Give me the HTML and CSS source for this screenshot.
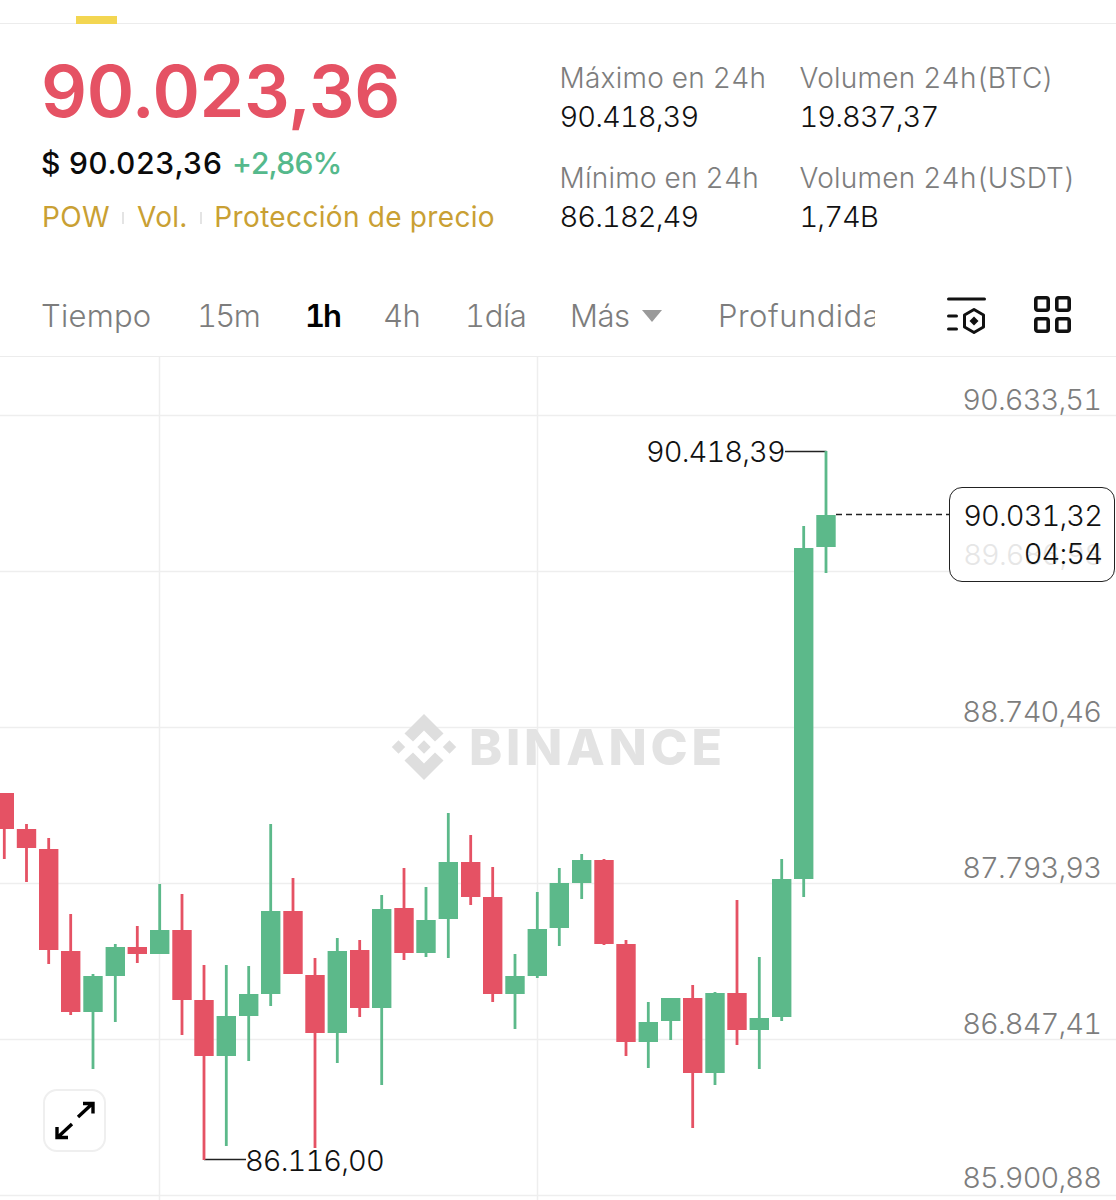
FILE: index.html
```html
<!DOCTYPE html>
<html lang="es">
<head>
<meta charset="utf-8">
<title>BTC/USDT</title>
<link rel="stylesheet" href="styles.css">
</head>
<body>
<div class="page">
  <div class="topbar"><span class="indicator"></span></div>
  <section class="summary">
    <div class="price-col">
      <div class="price">90.023,36</div>
      <div class="sub"><span class="fiat">$ 90.023,36</span><span class="change">+2,86%</span></div>
      <div class="tags"><span>POW</span><i class="sep"></i><span>Vol.</span><i class="sep"></i><span>Protección de precio</span></div>
    </div>
    <div class="stats">
      <div class="stat"><div class="stat-label">Máximo en 24h</div><div class="stat-value">90.418,39</div></div>
      <div class="stat"><div class="stat-label">Volumen 24h(BTC)</div><div class="stat-value">19.837,37</div></div>
      <div class="stat"><div class="stat-label">Mínimo en 24h</div><div class="stat-value">86.182,49</div></div>
      <div class="stat"><div class="stat-label">Volumen 24h(USDT)</div><div class="stat-value">1,74B</div></div>
    </div>
  </section>
  <nav class="tabs">
    <span class="tab t-time">Tiempo</span>
    <span class="tab t-15">15m</span>
    <span class="tab t-1h active">1h</span>
    <span class="tab t-4h">4h</span>
    <span class="tab t-1d">1día</span>
    <span class="tab t-more">Más<i class="caret"></i></span>
    <span class="tab t-depth">Profundida</span>
    <svg class="icon-list" viewBox="0 0 40 38" fill="none" stroke="#111" stroke-width="3" stroke-linecap="round" stroke-linejoin="round"><path d="M2.500 2h36M2.500 19h8M2.500 32h8"/><path d="M28 12.500l9.500 5.500v12l-9.500 5.500-9.500-5.500V18z"/><path d="M28 19.500l4.500 4.500L28 28.500l-4.500-4.500z" fill="#111" stroke="none"/></svg>
    <svg class="icon-grid" viewBox="0 0 38 38" fill="none" stroke="#111" stroke-width="3.600" stroke-linejoin="round"><rect x="2.800" y="1.800" width="12.400" height="12.400" rx="2"/><rect x="23.800" y="1.800" width="12.400" height="12.400" rx="2"/><rect x="2.800" y="22.800" width="12.400" height="12.400" rx="2"/><rect x="23.800" y="22.800" width="12.400" height="12.400" rx="2"/></svg>
  </nav>
  <div class="chart">
    <svg class="plot" viewBox="0 357 1116 843">
      <path class="grid" d="M0 415.5H1116M0 571.5H1116M0 727.5H1116M0 883.5H1116M0 1039.5H1116M0 1195.5H1116M159.5 357V1200M537.5 357V1200"/>
      <path class="leader" d="M785 451.5H826.5M204 1159.5H246"/>
      <path class="dash" d="M836 514.5H949"/>
      <path class="wick red" d="M4.3 793V859M26.5 824V882M48.7 838V964M70.7 914V1015M137.3 926V963M182 894V1035M204 965V1160M293 878V974M315 958V1148M359.7 940V1017M404 868V960M470.7 835V905M492.7 867V1002M604 859V945M626 940V1056M692.7 985V1128M737 900V1045"/>
      <path class="body red" d="M4.3 793V829M26.5 829V848M48.7 849V950M70.7 951V1012M137.3 947V954M182 930V1000M204 1000V1056M293 911V974M315 975V1033M359.7 950V1008M404 908V953M470.7 862V897M492.7 897V994M604 860V944M626 944V1042M692.7 998V1073M737 993V1030"/>
      <path class="wick green" d="M93 974V1069M115.3 944V1022M159.7 884V954M226.3 965V1146M248.7 966V1061M270.7 824V1006M337.3 938V1063M381.7 895V1085M426 887V957M448.3 813V958M515 954V1029M537.3 892V978M559.3 868V946M581.7 854V899M648.3 1002V1068M670.7 998V1040M715 992V1085M759.3 957V1069M781.7 859V1021M803.7 526V897M826 451V573"/>
      <path class="body green" d="M93 976V1012M115.3 947V976M159.7 930V954M226.3 1016V1056M248.7 994V1016M270.7 911V994M337.3 951V1033M381.7 909V1008M426 920V953M448.3 862V919M515 976V994M537.3 929V976M559.3 883V928M581.7 860V883M648.3 1022V1042M670.7 998V1021M715 993V1073M759.3 1018V1030M781.7 879V1017M803.7 548V879M826 515V547"/>
    </svg>
    <div class="watermark">
      <svg class="logo" viewBox="-33 -33 66 66"><path d="M0-33L19.500-13.500L11-5.500L0-16.500L-11-5.500L-19.500-13.500zM0 33L19.500 13.500L11 5.500L0 16.500L-11 5.500L-19.500 13.500zM0-6.700L6.700 0L0 6.700L-6.700 0zM-25.500-6.700L-18.800 0L-25.500 6.700L-32.200 0zM25.500-6.700L32.200 0L25.500 6.700L18.800 0z"/></svg>
      <span class="wm-text">BINANCE</span>
    </div>
    <span class="axis a1">90.633,51</span>
    <span class="axis a3">88.740,46</span>
    <span class="axis a4">87.793,93</span>
    <span class="axis a5">86.847,41</span>
    <span class="axis a6">85.900,88</span>
    <span class="mark m-high">90.418,39</span>
    <span class="mark m-low">86.116,00</span>
    <div class="tag">
      <span class="tag-under">89.686,98</span>
      <span class="tag-price">90.031,32</span>
      <span class="tag-time">04:54</span>
    </div>
    <div class="expand">
      <svg viewBox="0 0 40 40" fill="none" stroke="#000" stroke-width="3.400"><path d="M23 16L37 3M28 2.500h10v10M17 23L3 36M2 26v10.500h11"/></svg>
    </div>
  </div>
</div>
</body>
</html>
```
FILE: styles.css
```css
* { box-sizing: border-box; }
html, body { margin: 0; padding: 0; background: #fff; }
body { font-family: "Inter", "Liberation Sans", sans-serif; color: #111; font-variant-numeric: tabular-nums; }
.page { width: 1116px; height: 1200px; overflow: hidden; display: flex; flex-direction: column; }

.topbar { height: 24px; border-bottom: 1px solid #ececec; padding-left: 76px; display: flex; align-items: flex-end; }
.indicator { display: block; width: 41px; height: 8px; margin-bottom: -1px; background: #f3d651; }

.summary { display: flex; height: 239px; padding-left: 41px; }
.price-col { width: 518.5px; display: flex; flex-direction: column; }
.price { font-size: 72px; line-height: 74px; font-weight: 600; color: #e55264; margin-top: 30px; letter-spacing: -0.35px; font-variant-numeric: normal; }
.sub { display: flex; gap: 10px; margin-top: 15px; font-size: 30px; line-height: 40px; }
.fiat { color: #0b0b0b; font-weight: 500; letter-spacing: 0.15px; }
.change { color: #55b98c; font-weight: 500; letter-spacing: -1.1px; }
.tags { display: flex; align-items: center; margin: 14px 0 0 1px; font-size: 28px; line-height: 40px; color: #c9a033; letter-spacing: 0.35px; }
.sep { display: block; width: 2px; height: 12px; background: #e4e4e4; margin: 2px 12.5px 0; }

.stats { display: grid; grid-template-columns: 240px 1fr; grid-auto-rows: 100px; padding-top: 34px; }
.stat-label { font-size: 28px; line-height: 40px; color: #7d7d7d; letter-spacing: 0.25px; font-weight: 300; }
.stat-value { font-size: 29px; line-height: 38px; color: #111; letter-spacing: -0.9px; font-weight: 300; }

.tabs { height: 94px; border-bottom: 1px solid #ececec; display: flex; align-items: center; padding: 12px 0 0 41px; font-size: 31px; color: #7d7d7d; letter-spacing: 0.25px; font-weight: 300; }
.tab { display: flex; align-items: center; flex: none; white-space: nowrap; line-height: 40px; }
.t-time { width: 156px; }
.t-15 { width: 108px; letter-spacing: -1.7px; }
.t-1h { width: 78px; letter-spacing: -2px; }
.t-4h { width: 82px; letter-spacing: -0.5px; }
.t-1d { width: 105px; letter-spacing: -0.4px; }
.t-more { width: 148px; letter-spacing: -0.5px; }
.t-depth { width: 157px; overflow: hidden; letter-spacing: 0.5px; }
.active { color: #000; font-weight: 600; }
.caret { display: block; margin-left: 13px; width: 0; height: 0; border-left: 10.500px solid transparent; border-right: 10.500px solid transparent; border-top: 12px solid #9a9a9a; }
.icon-list { flex: none; width: 40px; height: 38px; margin-left: 71px; }
.icon-grid { flex: none; width: 38px; height: 38px; margin: -2px 0 0 47px; }

.chart { position: relative; flex: 1; }
.plot { position: absolute; left: 0; top: 0; width: 1116px; height: 843px; }
.grid { stroke: #eeeeee; stroke-width: 1.5; fill: none; }
.leader { stroke: #222; stroke-width: 1.5; fill: none; }
.dash { stroke: #222; stroke-width: 1.5; stroke-dasharray: 6 4; fill: none; }
.wick { stroke-width: 2.8; fill: none; }
.body { stroke-width: 19.4; fill: none; }
.red { stroke: #e55264; }
.green { stroke: #5cb98a; }

.watermark { position: absolute; left: 391px; top: 357px; display: flex; align-items: center; gap: 12px; }
.logo { display: block; width: 66px; height: 66px; fill: #dedede; }
.wm-text { font-size: 50px; line-height: 66px; font-weight: 800; color: #e3e3e3; letter-spacing: 3.8px; }

.axis { position: absolute; right: 15px; font-size: 29px; line-height: 36px; color: #7d7d7d; letter-spacing: -0.9px; font-weight: 300; }
.a1 { top: 25px; }
.a3 { top: 337px; }
.a4 { top: 493px; }
.a5 { top: 649px; }
.a6 { top: 803px; }
.mark { position: absolute; font-size: 29px; line-height: 36px; color: #111; letter-spacing: -0.9px; font-weight: 300; }
.m-high { left: 646px; top: 77px; }
.m-low { left: 245px; top: 786px; }

.tag { position: absolute; left: 949px; top: 130px; width: 166px; height: 95px; border: 1.5px solid #222; border-radius: 13px; background: #fff; }
.tag-price, .tag-time, .tag-under { position: absolute; right: 12px; font-size: 29px; line-height: 36px; letter-spacing: -0.9px; font-weight: 300; }
.tag-price { top: 10px; color: #111; }
.tag-time { top: 48px; color: #111; }
.tag-under { top: 49px; color: #e6e6e6; }

.expand { position: absolute; left: 43px; top: 732px; width: 63px; height: 63px; border: 2px solid #efefef; border-radius: 14px; background: #fff; display: flex; align-items: center; justify-content: center; }
.expand svg { display: block; width: 40px; height: 40px; }
```
